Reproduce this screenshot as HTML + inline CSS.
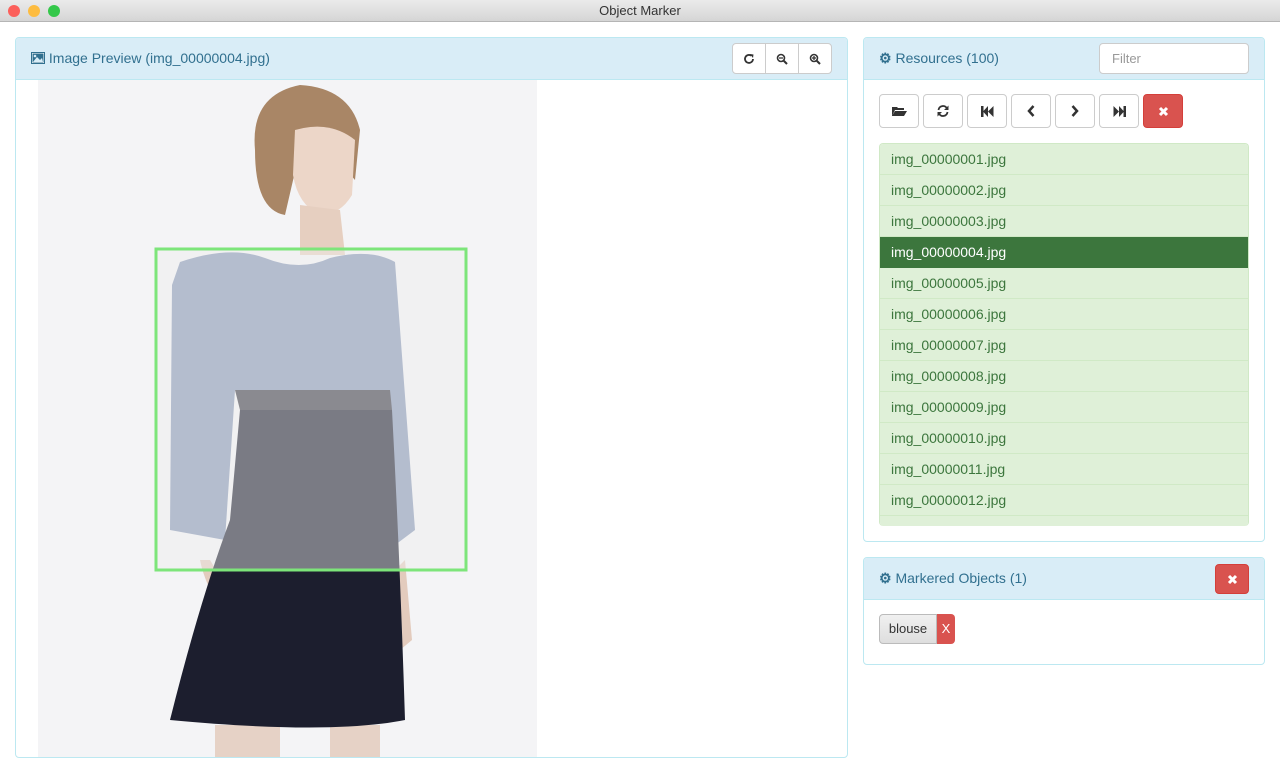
<!DOCTYPE html>
<html><head><meta charset="utf-8"><style>
*{box-sizing:border-box;margin:0;padding:0}
body{width:1280px;height:773px;background:#fff;font-family:"Liberation Sans",sans-serif;position:relative;overflow:hidden}
.title{position:absolute;left:0;top:0;width:1280px;height:22px;background:linear-gradient(#ebebeb,#d5d5d5);border-bottom:1px solid #b5b5b5;text-align:center;font-size:13px;line-height:22px;color:#333}
.dot{position:absolute;top:5px;width:12px;height:12px;border-radius:50%}
.panel{position:absolute;border:1px solid #bce8f1;border-radius:4px;background:#fff;overflow:hidden}
.ph{background:#d9edf7;border-bottom:1px solid #bce8f1;color:#31708f;font-size:14px;position:relative}
.btn{position:absolute;border:1px solid #ccc;border-radius:4px;background:#fff;display:flex;align-items:center;justify-content:center}
.red{background:#d9534f;border-color:#d43f3a}
.item{height:31px;border-bottom:1px solid #d0e9c6;color:#3c763d;background:#dff0d8;font-size:14px;line-height:31px;padding-left:11px}
.act{background:#3c763d;color:#fff;border-color:#3c763d}
</style></head><body>
<div class="title">Object Marker
<div class="dot" style="left:8px;background:#fc605b"></div><div class="dot" style="left:28px;background:#fdbc40"></div><div class="dot" style="left:48px;background:#34c84a"></div></div>

<div class="panel" style="left:15px;top:37px;width:833px;height:721px">
 <div class="ph" style="height:42px;line-height:41px;padding-left:15px">
  <svg width="14" height="12" viewBox="0 0 14 12" style="vertical-align:-1px"><rect x="0.5" y="0.5" width="13" height="11" fill="#fff" stroke="#31708f"/><rect x="1.5" y="1.5" width="11" height="9" fill="#31708f"/><path d="M2 10 L6 5 L9 8 L11 6 L12 10Z" fill="#d9edf7"/><circle cx="4" cy="4" r="1.3" fill="#d9edf7"/></svg> Image Preview (img_00000004.jpg)
  <div style="position:absolute;left:716px;top:5px;width:100px;height:31px;border:1px solid #ccc;border-radius:4px;background:#fff;display:flex">
   <div style="flex:1;border-right:1px solid #ccc;display:flex;align-items:center;justify-content:center"><svg width="12" height="12" viewBox="0 0 12 12"><path d="M10 6 A4 4 0 1 1 8.5 2.8" fill="none" stroke="#333" stroke-width="1.8"/><path d="M7 1 L10.5 1.5 L10 5Z" fill="#333"/></svg></div>
   <div style="flex:1;border-right:1px solid #ccc;display:flex;align-items:center;justify-content:center"><svg width="12" height="12" viewBox="0 0 12 12"><circle cx="5" cy="5" r="3.5" fill="none" stroke="#333" stroke-width="1.6"/><path d="M7.5 7.5 L11 11" stroke="#333" stroke-width="2"/><path d="M3 5 H7" stroke="#333" stroke-width="1.3"/></svg></div>
   <div style="flex:1;display:flex;align-items:center;justify-content:center"><svg width="12" height="12" viewBox="0 0 12 12"><circle cx="5" cy="5" r="3.5" fill="none" stroke="#333" stroke-width="1.6"/><path d="M7.5 7.5 L11 11" stroke="#333" stroke-width="2"/><path d="M3 5 H7 M5 3 V7" stroke="#333" stroke-width="1.3"/></svg></div>
  </div>
 </div>
</div>

<svg style="position:absolute;left:0;top:0" width="848" height="773">
 <rect x="38" y="80" width="499" height="677" fill="#f4f4f6"/>
 <path d="M255 150 Q250 95 300 85 Q350 88 360 130 L355 180 Q330 150 300 150 L285 215 Q255 210 255 150Z" fill="#a98666"/>
 <path d="M295 130 Q330 120 355 140 L352 195 Q340 215 320 215 Q298 205 293 175Z" fill="#ecd6c8"/>
 <path d="M300 205 L340 210 L345 255 L300 255Z" fill="#e6cfc0"/>
 <path d="M210 560 Q225 585 235 600 L222 610 Q205 585 200 560Z M405 560 L412 640 L400 650 L395 570Z" fill="#e3cbbd"/>
 <path d="M215 725 H280 V757 H215Z M330 725 H380 V757 H330Z" fill="#e6d2c6"/>
 <path d="M180 262 Q230 245 265 258 Q300 272 330 258 Q370 248 395 262 L415 530 L395 545 L385 390 L235 390 L225 540 L170 530 L172 285Z" fill="#8595b5"/>
 <path d="M235 390 H390 L392 410 H240Z" fill="#3a3a44"/>
 <path d="M240 410 H392 Q400 560 405 720 Q330 735 170 720 Q200 600 230 520Z" fill="#1c1e2e"/>
 <rect x="156" y="249" width="310" height="321" fill="rgba(238,238,238,0.45)" stroke="#7de57a" stroke-width="3"/>
</svg>

<div class="panel" style="left:863px;top:37px;width:402px;height:505px">
 <div class="ph" style="height:42px;line-height:41px;padding-left:15px">
  <span style="font-weight:bold">&#9881;</span> Resources (100)
  <div style="position:absolute;left:235px;top:5px;width:150px;height:31px;border:1px solid #ccc;border-radius:4px;background:#fff;color:#999;font-size:13px;line-height:29px;padding-left:12px">Filter</div>
 </div>
 <div class="btn" style="left:15px;top:56px;width:40px;height:34px"><svg width="16" height="12" viewBox="0 0 16 12"><path d="M1 2 H6 L7 3 H13 V5 H4 L1 11Z M4 6 H16 L13 11 H1Z" fill="#333"/></svg></div>
 <div class="btn" style="left:59px;top:56px;width:40px;height:34px"><svg width="14" height="14" viewBox="0 0 14 14"><path d="M2.5 6 A4.5 4.5 0 0 1 11 4.5 M11.5 8 A4.5 4.5 0 0 1 3 9.5" fill="none" stroke="#333" stroke-width="1.8"/><path d="M12.5 1.5 V6 H8Z M1.5 12.5 V8 H6Z" fill="#333"/></svg></div>
 <div class="btn" style="left:103px;top:56px;width:40px;height:34px"><svg width="13" height="11" viewBox="0 0 13 11"><rect x="0" y="0" width="2.5" height="11" fill="#333"/><path d="M2 5.5 L7 0 V11Z M7 5.5 L12.5 0 V11Z" fill="#333"/></svg></div>
 <div class="btn" style="left:147px;top:56px;width:40px;height:34px"><svg width="8" height="12" viewBox="0 0 8 12"><path d="M6.5 1 L2 6 L6.5 11" fill="none" stroke="#333" stroke-width="2.5"/></svg></div>
 <div class="btn" style="left:191px;top:56px;width:40px;height:34px"><svg width="8" height="12" viewBox="0 0 8 12"><path d="M1.5 1 L6 6 L1.5 11" fill="none" stroke="#333" stroke-width="2.5"/></svg></div>
 <div class="btn" style="left:235px;top:56px;width:40px;height:34px"><svg width="13" height="11" viewBox="0 0 13 11"><rect x="10.5" y="0" width="2.5" height="11" fill="#333"/><path d="M11 5.5 L6 0 V11Z M6 5.5 L0.5 0 V11Z" fill="#333"/></svg></div>
 <div class="btn red" style="left:279px;top:56px;width:40px;height:34px"><svg width="11" height="11" viewBox="0 0 11 11"><path d="M2 2 L9 9 M9 2 L2 9" stroke="#fff" stroke-width="3"/></svg></div>
 <div style="position:absolute;left:15px;top:105px;width:370px;height:383px;overflow:hidden;border:1px solid #d0e9c6;border-radius:4px;border-bottom:none">
  <div class="item">img_00000001.jpg</div><div class="item">img_00000002.jpg</div><div class="item">img_00000003.jpg</div>
  <div class="item act">img_00000004.jpg</div><div class="item">img_00000005.jpg</div><div class="item">img_00000006.jpg</div>
  <div class="item">img_00000007.jpg</div><div class="item">img_00000008.jpg</div><div class="item">img_00000009.jpg</div>
  <div class="item">img_00000010.jpg</div><div class="item">img_00000011.jpg</div><div class="item">img_00000012.jpg</div>
  <div class="item">img_00000013.jpg</div>
 </div>
</div>

<div class="panel" style="left:863px;top:557px;width:402px;height:108px">
 <div class="ph" style="height:42px;line-height:41px;padding-left:15px">
  <span style="font-weight:bold">&#9881;</span> Markered Objects (1)
  <div class="btn red" style="left:351px;top:6px;width:34px;height:30px"><svg width="11" height="11" viewBox="0 0 11 11"><path d="M2 2 L9 9 M9 2 L2 9" stroke="#fff" stroke-width="3"/></svg></div>
 </div>
 <div style="position:absolute;left:15px;top:56px;height:30px;display:flex;font-size:13px">
  <div style="width:58px;background:linear-gradient(#f0f0f0,#dedede);border:1px solid #bbb;border-radius:4px 0 0 4px;line-height:28px;text-align:center;color:#333">blouse</div>
  <div style="width:18px;background:#d9534f;border-radius:0 4px 4px 0;color:#fff;line-height:30px;text-align:center">X</div>
 </div>
</div>
</body></html>
